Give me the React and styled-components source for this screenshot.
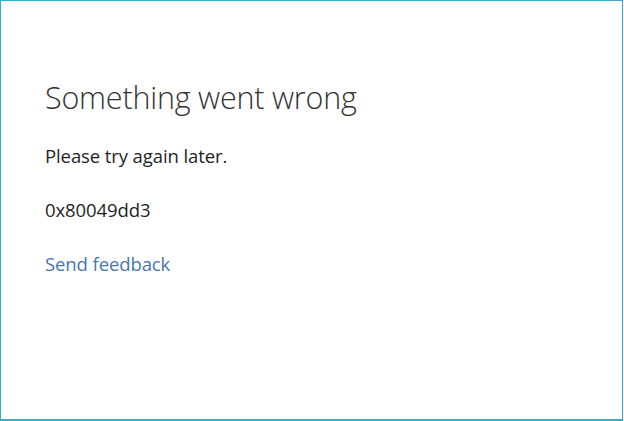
import React from "react";
import styled, { createGlobalStyle } from "styled-components";

const Global = createGlobalStyle`
  html, body { margin: 0; padding: 0; background: #fff; }
  body { font-family: "Open Sans", "Noto Sans", sans-serif; }
`;

const Frame = styled.div`
  box-sizing: border-box;
  width: 623px;
  height: 421px;
  border: 1px solid #3ba9c9;
  border-bottom-width: 2px;
  background: #fff;
  padding: 72px 0 0 44px;
  display: flex;
  flex-direction: column;
`;

const Title = styled.h1`
  margin: 0;
  font-family: "Open Sans", sans-serif;
  font-weight: 300;
  font-size: 30.5px;
  line-height: 48px;
  color: #333;
  letter-spacing: -0.2px;
`;

const Message = styled.p`
  margin: ${(p) => p.$top}px 0 0;
  font-family: "Open Sans", sans-serif;
  font-size: 18.5px;
  line-height: 24px;
  color: #1f1f1f;
  letter-spacing: -0.1px;
`;

const Link = styled.a`
  margin-top: 30px;
  font-family: "Open Sans", sans-serif;
  font-size: 18.5px;
  line-height: 24px;
  color: #4678ad;
  text-decoration: none;
  align-self: flex-start;
  letter-spacing: -0.1px;
`;

export default function App() {
  return (
    <>
      <Global />
      <Frame>
        <Title>Something went wrong</Title>
        <Message $top={23}>Please try again later.</Message>
        <Message $top={30}>0x80049dd3</Message>
        <Link href="#">Send feedback</Link>
      </Frame>
    </>
  );
}
